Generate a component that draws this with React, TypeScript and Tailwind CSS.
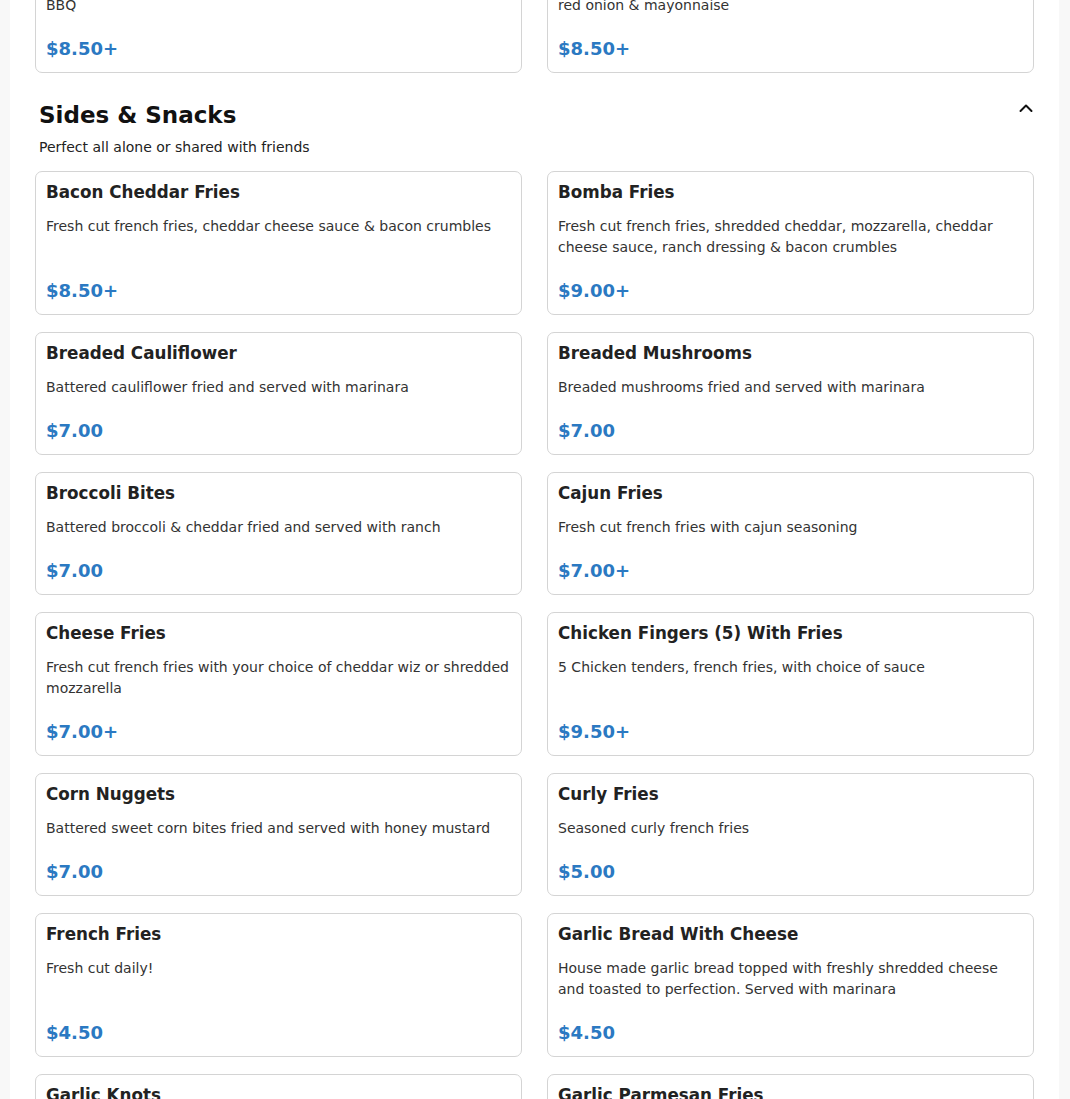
import React from "react";

type Item = { name: string; desc: string; price: string };

// last row of the section above (scrolled mostly out of view)
const prev: Item[] = [
  {
    name: "BBQ Chicken Fries",
    desc: "Fresh cut french fries topped with pulled chicken, cheddar &\nBBQ",
    price: "$8.50+",
  },
  {
    name: "Chicken Cutlet Fries",
    desc: "Fresh cut fries, crispy chicken cutlet, lettuce, tomato,\nred onion & mayonnaise",
    price: "$8.50+",
  },
];

const sides: Item[] = [
  { name: "Bacon Cheddar Fries", desc: "Fresh cut french fries, cheddar cheese sauce & bacon crumbles", price: "$8.50+" },
  { name: "Bomba Fries", desc: "Fresh cut french fries, shredded cheddar, mozzarella, cheddar cheese sauce, ranch dressing & bacon crumbles", price: "$9.00+" },
  { name: "Breaded Cauliflower", desc: "Battered cauliflower fried and served with marinara", price: "$7.00" },
  { name: "Breaded Mushrooms", desc: "Breaded mushrooms fried and served with marinara", price: "$7.00" },
  { name: "Broccoli Bites", desc: "Battered broccoli & cheddar fried and served with ranch", price: "$7.00" },
  { name: "Cajun Fries", desc: "Fresh cut french fries with cajun seasoning", price: "$7.00+" },
  { name: "Cheese Fries", desc: "Fresh cut french fries with your choice of cheddar wiz or shredded mozzarella", price: "$7.00+" },
  { name: "Chicken Fingers (5) With Fries", desc: "5 Chicken tenders, french fries, with choice of sauce", price: "$9.50+" },
  { name: "Corn Nuggets", desc: "Battered sweet corn bites fried and served with honey mustard", price: "$7.00" },
  { name: "Curly Fries", desc: "Seasoned curly french fries", price: "$5.00" },
  { name: "French Fries", desc: "Fresh cut daily!", price: "$4.50" },
  { name: "Garlic Bread With Cheese", desc: "House made garlic bread topped with freshly shredded cheese and toasted to perfection. Served with marinara", price: "$4.50" },
  { name: "Garlic Knots", desc: "Fresh baked garlic knots served with marinara", price: "$5.00" },
  { name: "Garlic Parmesan Fries", desc: "Fresh cut french fries tossed in garlic butter & parmesan", price: "$7.00+" },
];

function ItemCard({ item }: { item: Item }) {
  return (
    <div className="flex flex-col border border-[#d4d4d4] rounded-[7px] bg-white px-[10px] pt-[9px] pb-[11px] cursor-pointer">
      <h3 className="text-[16.75px] leading-[22px] font-bold text-[#222]">{item.name}</h3>
      <p className="mt-[13px] whitespace-pre-line text-[14px] leading-[21px] text-[#333]">{item.desc}</p>
      <p className="mt-auto pt-[21px] text-[18px] leading-[24px] font-bold text-[#2b79c2]">{item.price}</p>
    </div>
  );
}

export default function App() {
  return (
    <div className="min-h-screen bg-[#f8f8f8] font-['DejaVu_Sans',sans-serif]">
      <div className="ml-[10px] mr-[11px] min-h-screen bg-white px-[25px] pb-10">
        <div className="-mt-[71px] grid grid-cols-2 gap-x-[25px] gap-y-[17px]">
          {prev.map((it) => (
            <ItemCard key={it.name} item={it} />
          ))}
        </div>

        <section className="mt-[27px]">
          <div className="flex items-start justify-between px-[4px]">
            <div>
              <h2 className="text-[23px] leading-[30px] font-bold text-[#111]">Sides &amp; Snacks</h2>
              <p className="mt-[7px] text-[14px] leading-[20px] text-[#222]">Perfect all alone or shared with friends</p>
            </div>
            <svg className="mt-[-4px] mr-[-8px]" width="24" height="24" viewBox="0 0 24 24" fill="none" stroke="#111" strokeWidth="2" strokeLinecap="round" strokeLinejoin="round">
              <path d="M6.5 15l5.5-5.5 5.5 5.5" />
            </svg>
          </div>
          <div className="mt-[14px] grid grid-cols-2 gap-x-[25px] gap-y-[17px]">
            {sides.map((it) => (
              <ItemCard key={it.name} item={it} />
            ))}
          </div>
        </section>
      </div>
    </div>
  );
}
